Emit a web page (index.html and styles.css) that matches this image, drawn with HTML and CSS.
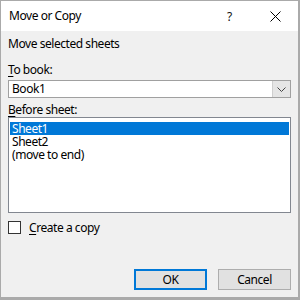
FILE: index.html
```html
<!DOCTYPE html>
<html>
<head>
    <title>Move or Copy</title>
    <link rel="stylesheet" href="styles.css">
</head>
<body>
    <div class="dialog">
        <div class="titlebar">
            <span class="title">Move or Copy</span>
            <span class="title-btn help">?</span>
            <span class="title-btn close">
                <svg width="11" height="11" viewBox="0 0 11 11">
                    <path d="M0.5 0.5 L10.5 10.5 M10.5 0.5 L0.5 10.5" stroke="#000" stroke-width="1" fill="none"/>
                </svg>
            </span>
        </div>
        <div class="content">
            <p class="intro">Move selected sheets</p>
            <div class="field-label"><u>T</u>o book:</div>
            <div class="combo">
                <span class="combo-value">Book1</span>
                <span class="combo-btn">
                    <svg width="9" height="5" viewBox="0 0 9 5">
                        <path d="M0.5 0.5 L4.5 4.5 L8.5 0.5" stroke="#444" stroke-width="1" fill="none"/>
                    </svg>
                </span>
            </div>
            <div class="field-label"><u>B</u>efore sheet:</div>
            <ul class="sheet-list">
                <li class="selected">Sheet1</li>
                <li>Sheet2</li>
                <li>(move to end)</li>
            </ul>
            <label class="check">
                <span class="check-box"></span>
                <span><u>C</u>reate a copy</span>
            </label>
            <div class="buttons">
                <button class="btn default">OK</button>
                <button class="btn">Cancel</button>
            </div>
        </div>
    </div>
</body>
</html>
```

FILE: styles.css
```css
body {
    margin: 0;
    font-family: "Noto Sans", "Open Sans", sans-serif;
    font-size: 12px;
    letter-spacing: -0.45px;
    color: #000;
    background: #fff;
}
.dialog {
    width: 300px;
    height: 300px;
    box-sizing: border-box;
    border-style: solid;
    border-color: #aaaaaa;
    border-width: 1px 2px 3px 1px;
    background-color: #f0f0f0;
    display: flex;
    flex-direction: column;
}
.titlebar {
    height: 30px;
    background-color: #fff;
    display: flex;
    align-items: center;
    padding-left: 8px;
}
.title {
    flex: 1;
    line-height: 14px;
    padding-bottom: 1px;
}
.title-btn {
    width: 46px;
    height: 30px;
    display: flex;
    align-items: center;
    justify-content: center;
}
.help {
    font-size: 12px;
    width: 45px;
    color: #111;
}
.content {
    flex: 1;
    padding: 0 7px 7px 7px;
    display: flex;
    flex-direction: column;
    line-height: 14px;
}
.intro {
    margin: 6px 0 0 0;
}
.field-label {
    margin-top: 12px;
}
.combo {
    margin-top: 3px;
    height: 18px;
    box-sizing: border-box;
    border: 1px solid #a0a0a0;
    background: #fff;
    display: flex;
}
.combo-value {
    flex: 1;
    padding-left: 3px;
    line-height: 16px;
}
.combo-btn {
    width: 17px;
    background-color: #e5e5e5;
    border-left: 1px solid #cfcfcf;
    display: flex;
    align-items: center;
    justify-content: center;
}
.combo + .field-label {
    margin-top: 5px;
}
.sheet-list {
    list-style: none;
    margin: 0;
    padding: 4px 1px 0 1px;
    height: 96px;
    box-sizing: border-box;
    border: 1px solid #828790;
    background: #fff;
}
.sheet-list li {
    height: 13px;
    line-height: 13px;
    padding-left: 2px;
}
.sheet-list li.selected {
    background-color: #0078d7;
    color: #fff;
}
.check {
    margin-top: 8px;
    display: flex;
    align-items: center;
    line-height: 13px;
}
.check-box {
    width: 13px;
    height: 13px;
    box-sizing: border-box;
    border: 1px solid #333;
    background: #fff;
    margin-right: 8px;
}
.buttons {
    margin-top: auto;
    display: flex;
    justify-content: flex-end;
    gap: 11px;
}
.btn {
    width: 73px;
    height: 21px;
    box-sizing: border-box;
    border: 1px solid #adadad;
    background-color: #e1e1e1;
    font-family: inherit;
    font-size: 12px;
    letter-spacing: inherit;
    color: #000;
    padding: 0;
}
.btn.default {
    border: 2px solid #0078d7;
}
u {
    text-decoration-thickness: 1px;
    text-underline-offset: 2px;
}
```
